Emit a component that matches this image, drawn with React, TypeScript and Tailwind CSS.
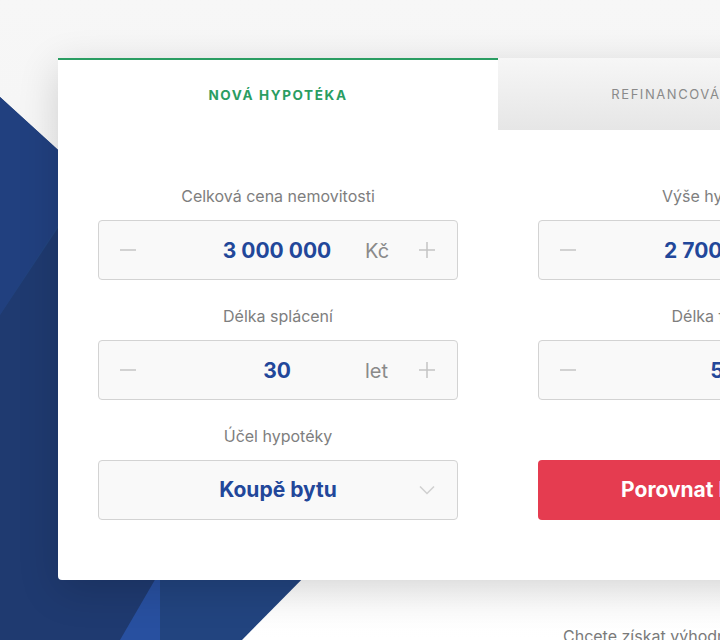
import React from "react";

const font = { fontFamily: "Inter, 'Noto Sans', sans-serif" };

function Minus() {
  return (
    <svg width="16" height="16" viewBox="0 0 16 16" className="text-[#c4c4c4]">
      <path d="M0 8h16" stroke="currentColor" strokeWidth="1.5" />
    </svg>
  );
}

function Plus() {
  return (
    <svg width="16" height="16" viewBox="0 0 16 16" className="text-[#c4c4c4]">
      <path d="M0 8h16M8 0v16" stroke="currentColor" strokeWidth="1.5" />
    </svg>
  );
}

function Stepper({ value, unit }: { value: string; unit: string }) {
  return (
    <div className="flex h-[60px] items-center rounded border border-[#d3d3d3] bg-[#f9f9f9]">
      <button className="flex h-full w-[58px] items-center justify-center">
        <Minus />
      </button>
      <div className="grid flex-1 grid-cols-[1fr_auto_1fr] items-center pt-[2px]">
        <span />
        <span className="text-[21px] font-bold text-[#22479a]">{value}</span>
        <span className="flex justify-end pr-[8px] text-[20px] text-[#8a8a8a]">
          <span className="w-[24px]">{unit}</span>
        </span>
      </div>
      <button className="flex h-full w-[60px] items-center justify-center">
        <Plus />
      </button>
    </div>
  );
}

function Field({ label, children }: { label?: string; children: React.ReactNode }) {
  return (
    <div className="flex flex-col gap-[15px]">
      <div className="h-[20px] pt-[1px] text-center text-[16px] leading-[20px] text-[#7e7e7e]">{label}</div>
      {children}
    </div>
  );
}

export default function App() {
  return (
    <div
      className="relative h-[640px] w-full overflow-hidden bg-gradient-to-b from-[#f7f7f7] via-[#f4f4f4] to-white"
      style={font}
    >
      <svg className="absolute inset-0" width="720" height="640" viewBox="0 0 720 640">
        <polygon points="0,97 410,470 242,640 0,640" fill="#22447f" />
        <polygon points="0,315 150,90 160,200 160,640 0,640" fill="#1f3a70" />
        <polygon points="120,640 160,571 160,640" fill="#2850a0" />
        <polygon points="0,97 58,150 58,225 0,315" fill="#21407f" />
      </svg>

      <div className="relative pl-[58px] pt-[58px]">
        <div className="w-[880px] rounded-b shadow-[0_10px_40px_rgba(0,0,0,0.16)]">
          <div className="flex items-end">
            <div className="flex h-[72px] w-[440px] items-center justify-center border-t-2 border-[#2a9d62] bg-white">
              <span className="text-[13.5px] font-bold tracking-[0.12em] text-[#2a9d62]">NOVÁ HYPOTÉKA</span>
            </div>
            <div className="flex h-[70px] w-[440px] items-center justify-center bg-gradient-to-b from-[#f6f6f6] to-[#e6e6e6]">
              <span className="text-[13px] tracking-[0.12em] text-[#8a8a8a]">REFINANCOVÁNÍ HYPOTÉKY</span>
            </div>
          </div>
          <div className="grid grid-cols-2 gap-x-[80px] rounded-b bg-white px-[40px] pb-[60px] pt-[55px]">
            <div className="flex flex-col gap-[25px]">
              <Field label="Celková cena nemovitosti">
                <Stepper value="3 000 000" unit="Kč" />
              </Field>
              <Field label="Délka splácení">
                <Stepper value="30" unit="let" />
              </Field>
              <Field label="Účel hypotéky">
                <div className="flex h-[60px] items-center rounded border border-[#d3d3d3] bg-[#f9f9f9]">
                  <span className="w-[60px]" />
                  <span className="flex-1 text-center text-[21px] font-bold text-[#22479a]">Koupě bytu</span>
                  <span className="flex w-[60px] items-center justify-center">
                    <svg width="16" height="10" viewBox="0 0 16 10">
                      <path d="M1 1.5l7 7 7-7" fill="none" stroke="#cfcfcf" strokeWidth="1.5" />
                    </svg>
                  </span>
                </div>
              </Field>
            </div>
            <div className="flex flex-col gap-[25px]">
              <Field label="Výše hypotéky">
                <Stepper value="2 700 000" unit="Kč" />
              </Field>
              <Field label="Délka fixace">
                <Stepper value="5" unit="let" />
              </Field>
              <Field>
                <button className="h-[60px] rounded bg-[#e53c50] text-[21px] font-bold text-white">
                  Porovnat hypotéky
                </button>
              </Field>
            </div>
          </div>
        </div>
        <div className="mt-[44px] pl-[505px] text-[16px] whitespace-nowrap text-[#7a7a7a]">
          Chcete získat výhodnější hypotéku?
        </div>
      </div>
    </div>
  );
}
